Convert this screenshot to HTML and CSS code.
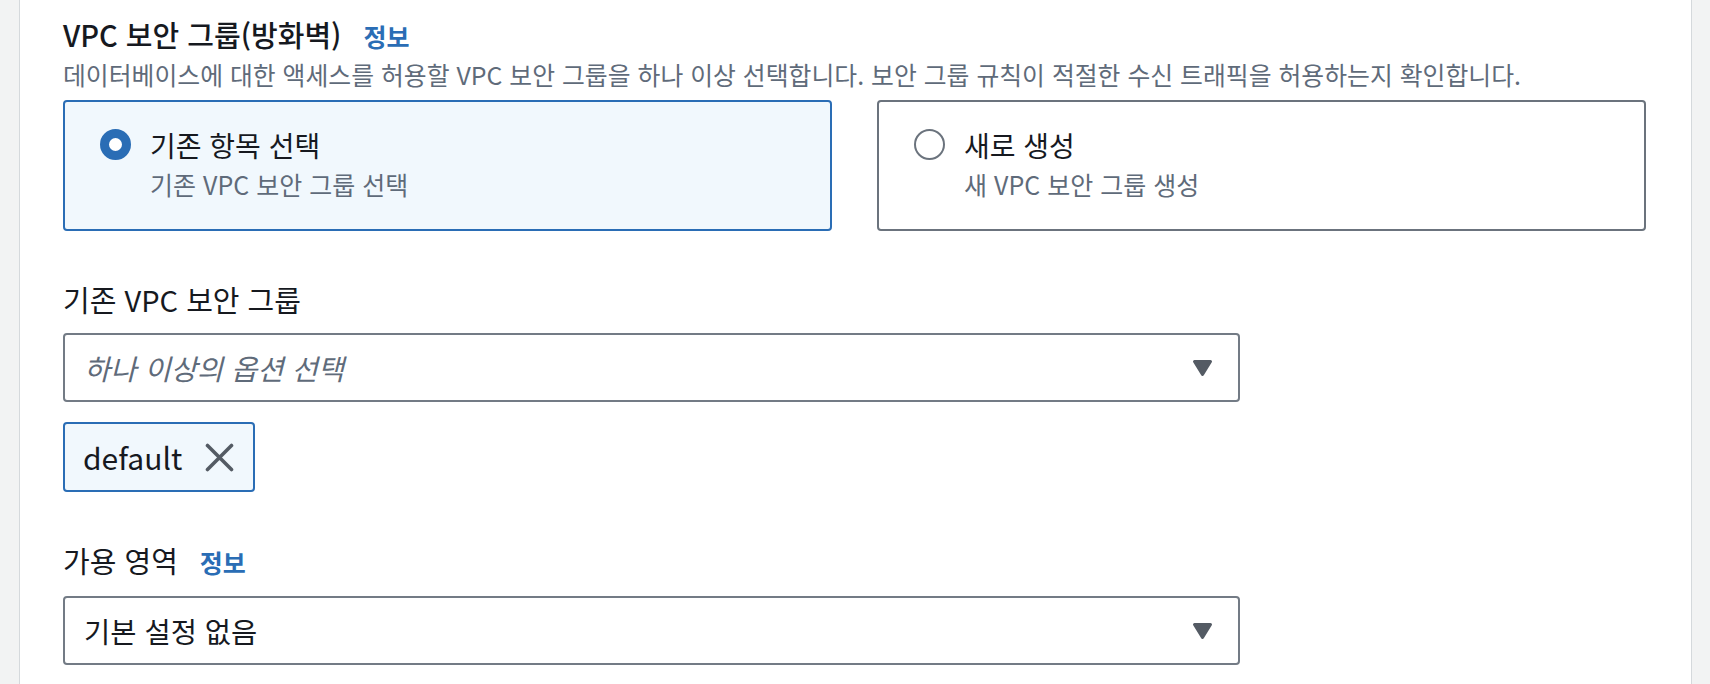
FILE: index.html
```html
<!DOCTYPE html>
<html lang="ko">
<head>
<meta charset="utf-8">
<title>VPC 보안 그룹</title>
<link rel="stylesheet" href="styles.css">
</head>
<body>
<div class="page">
  <div class="side side-left"></div>
  <main class="panel">
    <div class="field">
      <div class="title-row">
        <h2 class="title">VPC 보안 그룹(방화벽)</h2>
        <a class="info" href="#">정보</a>
      </div>
      <p class="desc">데이터베이스에 대한 액세스를 허용할 VPC 보안 그룹을 하나 이상 선택합니다. 보안 그룹 규칙이 적절한 수신 트래픽을 허용하는지 확인합니다.</p>
      <div class="tiles">
        <div class="tile tile-selected">
          <span class="radio radio-on"></span>
          <div class="tile-text">
            <div class="tile-label">기존 항목 선택</div>
            <div class="tile-sub">기존 VPC 보안 그룹 선택</div>
          </div>
        </div>
        <div class="tile">
          <span class="radio"></span>
          <div class="tile-text">
            <div class="tile-label">새로 생성</div>
            <div class="tile-sub">새 VPC 보안 그룹 생성</div>
          </div>
        </div>
      </div>
    </div>

    <div class="field field-sg">
      <div class="label">기존 VPC 보안 그룹</div>
      <div class="select">
        <span class="placeholder">하나 이상의 옵션 선택</span>
        <svg class="caret" width="21" height="18" viewBox="0 0 21 18"><path d="M2.5 2.5 H18.5 L10.5 15.5 Z" fill="#545b64" stroke="#545b64" stroke-width="3" stroke-linejoin="round"/></svg>
      </div>
      <div class="token">
        <span class="token-text">default</span>
        <svg class="token-x" width="29" height="29" viewBox="0 0 29 29"><path d="M2.5 2.5 L26.5 26.5 M26.5 2.5 L2.5 26.5" stroke="#545b64" stroke-width="3.6" stroke-linecap="round"/></svg>
      </div>
    </div>

    <div class="field field-az">
      <div class="title-row">
        <div class="label">가용 영역</div>
        <a class="info" href="#">정보</a>
      </div>
      <div class="select">
        <span class="value">기본 설정 없음</span>
        <svg class="caret" width="21" height="18" viewBox="0 0 21 18"><path d="M2.5 2.5 H18.5 L10.5 15.5 Z" fill="#545b64" stroke="#545b64" stroke-width="3" stroke-linejoin="round"/></svg>
      </div>
    </div>
  </main>
  <div class="side side-right"></div>
</div>
</body>
</html>
```
FILE: styles.css
```css
* { box-sizing: border-box; }
html, body {
  margin: 0;
  padding: 0;
  height: 100%;
  background: #ffffff;
}
body {
  font-family: "Noto Sans CJK KR", "Noto Sans", sans-serif;
  color: #16191f;
  overflow: hidden;
}
.page {
  display: flex;
  height: 684px;
}
.side {
  background: #f2f3f3;
}
.side-left {
  width: 20px;
  border-right: 1px solid #d5d9dc;
}
.side-right {
  width: 19px;
  border-left: 1px solid #d5d9dc;
}
.panel {
  flex: 1;
  background: #ffffff;
  padding: 16px 0 0 43px;
}
.field {
  display: flex;
  flex-direction: column;
}
.title-row {
  display: flex;
  align-items: baseline;
  gap: 22px;
}
.title {
  margin: 0;
  font-size: 29px;
  line-height: 36px;
  font-weight: 500;
  color: #16191f;
}
.info {
  font-size: 25px;
  line-height: 36px;
  font-weight: 700;
  color: #2a6db5;
  text-decoration: none;
}
.desc {
  margin: 4px 0 0 0;
  font-size: 24.85px;
  line-height: 32px;
  color: #5f6b7a;
  white-space: nowrap;
}
.tiles {
  display: flex;
  gap: 45px;
  margin-top: 10px;
  width: 1583px;
}
.tile {
  flex: 1;
  height: 131px;
  border: 2px solid #6b737d;
  border-radius: 4px;
  background: #ffffff;
  display: flex;
  align-items: flex-start;
  padding: 25px 0 0 35px;
  gap: 19px;
}
.tile-selected {
  border-color: #2a6db5;
  background: #f1f8fd;
}
.radio {
  width: 31px;
  height: 31px;
  border-radius: 50%;
  border: 2px solid #6b737d;
  background: #ffffff;
  flex: none;
  margin-top: 2px;
}
.radio-on {
  border: 9px solid #2a6db5;
}
.tile-text {
  display: flex;
  flex-direction: column;
}
.tile-label {
  font-size: 28px;
  line-height: 36px;
  color: #16191f;
}
.tile-sub {
  font-size: 25px;
  line-height: 32px;
  margin-top: 5px;
  color: #5f6b7a;
}
.field-sg {
  margin-top: 50px;
}
.label {
  font-size: 29px;
  line-height: 36px;
  color: #16191f;
}
.select {
  width: 1177px;
  height: 69px;
  margin-top: 16px;
  border: 2px solid #737b85;
  border-radius: 4px;
  background: #ffffff;
  display: flex;
  align-items: center;
  justify-content: space-between;
  padding: 0 25px 0 19px;
}
.placeholder {
  font-size: 28.5px;
  font-style: italic;
  color: #5f6b7a;
}
.value {
  font-size: 28.5px;
  color: #16191f;
}
.caret {
  display: block;
  margin-top: 1px;
}
.token {
  align-self: flex-start;
  margin-top: 20px;
  height: 70px;
  border: 2px solid #2a6db5;
  border-radius: 4px;
  background: #f1f8fd;
  display: flex;
  align-items: center;
  padding: 0 19px 0 18px;
  gap: 23px;
}
.token-text {
  font-size: 30px;
  font-weight: 400;
  color: #16191f;
}
.token-x {
  display: block;
}
.field-az {
  margin-top: 50px;
}
```
